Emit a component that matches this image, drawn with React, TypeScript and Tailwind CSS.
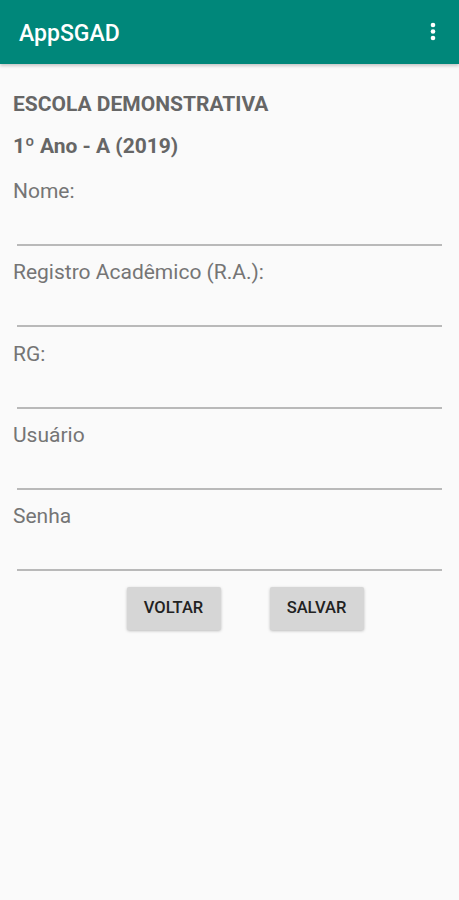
const fields = ["Nome:", "Registro Acadêmico (R.A.):", "RG:", "Usuário", "Senha"];

export default function App() {
  return (
    <div className="min-h-[900px] w-full bg-[#fafafa] font-['Roboto',sans-serif]">
      <header className="h-16 bg-[#00877a] flex items-center justify-between pl-[19px] pr-[18px] shadow-[0_2px_3px_rgba(0,0,0,0.2)]">
        <span className="text-white text-[23px] font-medium pt-[5px]">AppSGAD</span>
        <svg width="16" height="24" viewBox="0 0 16 24" className="mb-[1px]">
          <circle cx="8" cy="5" r="2.3" fill="white" />
          <circle cx="8" cy="11.5" r="2.3" fill="white" />
          <circle cx="8" cy="18" r="2.3" fill="white" />
        </svg>
      </header>

      <main className="px-[13px] pt-[26px]">
        <h1 className="text-[#666] text-[21px] font-bold leading-[28px]">ESCOLA DEMONSTRATIVA</h1>
        <h2 className="text-[#666] text-[21px] font-bold leading-[28px] mt-[14px]">1º Ano - A (2019)</h2>

        <div className="flex flex-col mt-[17px]">
          {fields.map((f) => (
            <div key={f} className="flex flex-col h-[81.25px]">
              <label className="text-[#757575] text-[21px] leading-[28px]">{f}</label>
              <div className="mt-[39px] mx-[4px] h-[2px] bg-[#b9b9b9]" />
            </div>
          ))}
        </div>

        <div className="flex justify-center gap-[49px] mt-[4px] pl-[31px]">
          <button className="w-[94px] h-[43px] bg-[#d6d6d6] rounded-[2px] shadow-[0_1px_3px_rgba(0,0,0,0.25)] text-[#222] text-[16.5px] font-medium">
            VOLTAR
          </button>
          <button className="w-[94px] h-[43px] bg-[#d6d6d6] rounded-[2px] shadow-[0_1px_3px_rgba(0,0,0,0.25)] text-[#222] text-[16.5px] font-medium">
            SALVAR
          </button>
        </div>
      </main>
    </div>
  );
}
